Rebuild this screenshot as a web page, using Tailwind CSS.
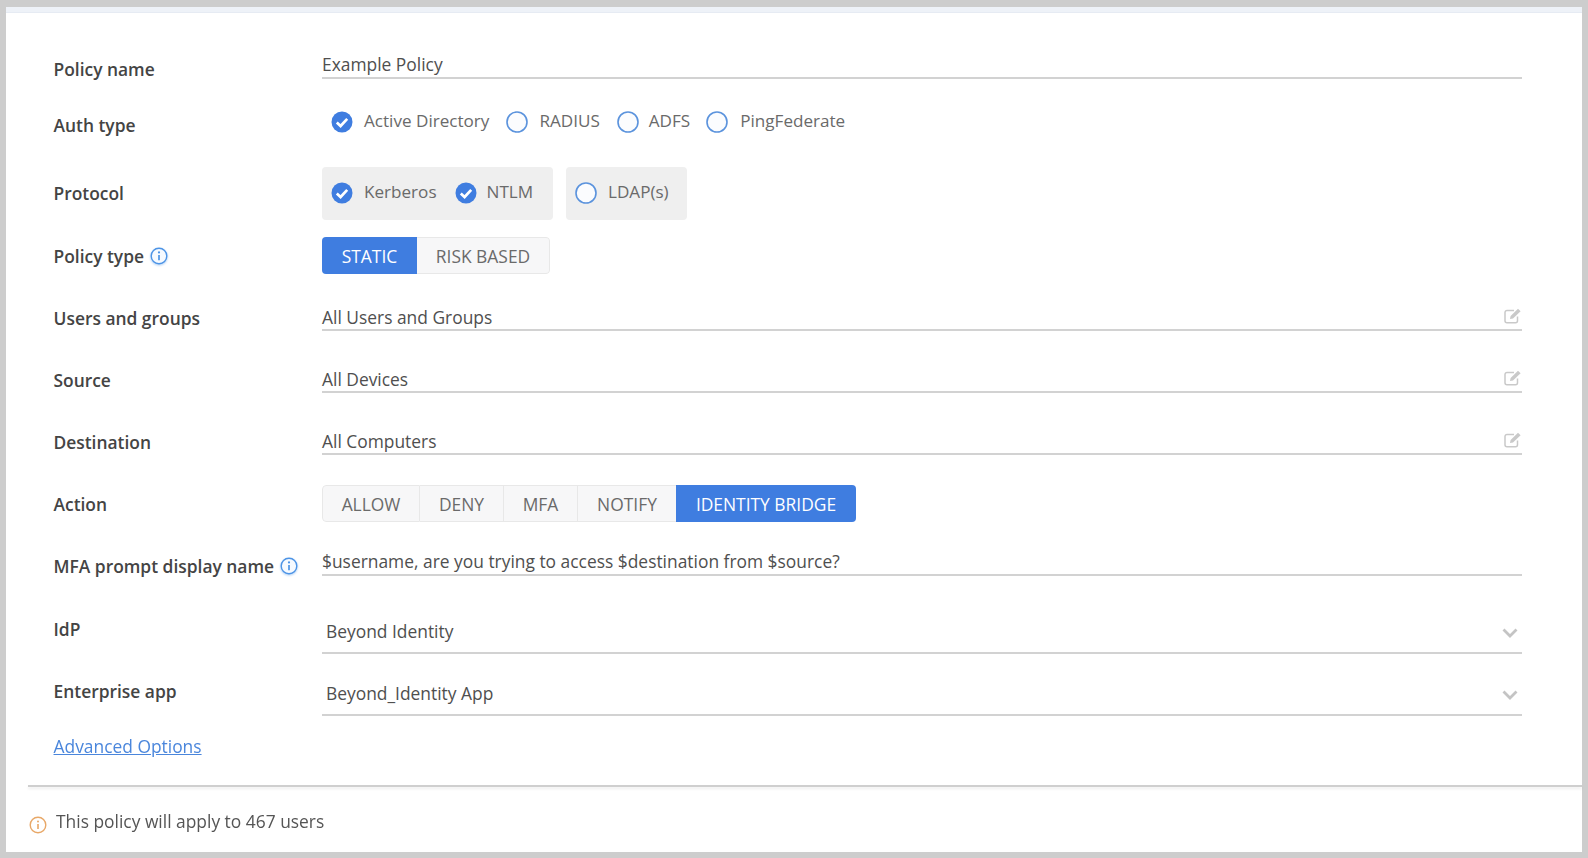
<!DOCTYPE html>
<html lang="en">
<head>
<meta charset="utf-8">
<title>Policy</title>
<script src="https://cdn.jsdelivr.net/npm/@tailwindcss/browser@4"></script>
</head>
<body class="bg-[#cdcdcd] font-['Open_Sans',sans-serif] text-[17.4px] leading-[24px] text-[#4f4f4f]">
<div class="w-[1588px] h-[858px] overflow-hidden pl-[6px] pt-[7px]">
  <div class="w-[1576px] h-[845px] bg-white flex flex-col blur-[0.4px]">
    <div class="h-[6px] shrink-0 bg-[#eef2f8] border-b border-[#e6ebf3]"></div>
    <div class="pl-[47.5px] pr-[60px] pt-[39px] flex flex-col h-[772px] shrink-0">

      <div class="flex h-[27px]">
        <div class="w-[268.5px] font-semibold text-[#444] pt-[5px]">Policy name</div>
        <div class="flex-1 border-b-2 border-[#d2d2d2] h-[27px]">Example Policy</div>
      </div>

      <div class="flex h-[32px] mt-[27px]">
        <div class="w-[268.5px] font-semibold text-[#444] pt-[7px]">Auth type</div>
        <div class="flex items-center pl-[9px] text-[#6a6a6a] text-[17.1px]">
          <svg class="w-[22px] h-[22px] mr-[11px]" viewBox="0 0 22 22"><circle cx="11" cy="11" r="10.5" fill="#3f7de0"/><path d="M5.8 11.4l3.8 3.6L16.2 7.8" fill="none" stroke="#fff" stroke-width="2.7"/></svg>
          <span class="mb-[2px]">Active Directory</span>
          <svg class="w-[22px] h-[22px] ml-[16.5px] mr-[11.5px]" viewBox="0 0 22 22"><circle cx="11" cy="11" r="10" fill="#fbfcfe" stroke="#5b93dd" stroke-width="1.6"/></svg>
          <span class="mb-[2px]">RADIUS</span>
          <svg class="w-[22px] h-[22px] ml-[17px] mr-[10px]" viewBox="0 0 22 22"><circle cx="11" cy="11" r="10" fill="#fbfcfe" stroke="#5b93dd" stroke-width="1.6"/></svg>
          <span class="mb-[2px]">ADFS</span>
          <svg class="w-[22px] h-[22px] ml-[16px] mr-[12px]" viewBox="0 0 22 22"><circle cx="11" cy="11" r="10" fill="#fbfcfe" stroke="#5b93dd" stroke-width="1.6"/></svg>
          <span class="mb-[2px]">PingFederate</span>
        </div>
      </div>

      <div class="flex h-[53px] mt-[29px]">
        <div class="w-[268.5px] font-semibold text-[#444] pt-[14px]">Protocol</div>
        <div class="flex gap-[13px] text-[#6a6a6a] text-[17.1px]">
          <div class="flex items-center h-[53px] w-[231px] pl-[9px] pb-[2px] bg-[#efefef] rounded-[4px]">
            <svg class="w-[22px] h-[22px] mr-[11px]" viewBox="0 0 22 22"><circle cx="11" cy="11" r="10.5" fill="#3f7de0"/><path d="M5.8 11.4l3.8 3.6L16.2 7.8" fill="none" stroke="#fff" stroke-width="2.7"/></svg>
            <span class="mb-[2px]">Kerberos</span>
            <svg class="w-[22px] h-[22px] ml-[18px] mr-[10px]" viewBox="0 0 22 22"><circle cx="11" cy="11" r="10.5" fill="#3f7de0"/><path d="M5.8 11.4l3.8 3.6L16.2 7.8" fill="none" stroke="#fff" stroke-width="2.7"/></svg>
            <span class="mb-[2px]">NTLM</span>
          </div>
          <div class="flex items-center h-[53px] w-[121px] pl-[9px] pb-[2px] bg-[#efefef] rounded-[4px]">
            <svg class="w-[22px] h-[22px] mr-[11px]" viewBox="0 0 22 22"><circle cx="11" cy="11" r="10" fill="#fbfcfe" stroke="#5b93dd" stroke-width="1.6"/></svg>
            <span class="mb-[2px]">LDAP(s)</span>
          </div>
        </div>
      </div>

      <div class="flex h-[37px] mt-[17px]">
        <div class="w-[268.5px] font-semibold text-[#444] flex items-center gap-[6px]">Policy type
          <svg class="w-[18px] h-[18px] drop-shadow-[0_1px_1px_rgba(77,148,230,0.45)]" viewBox="0 0 18 18"><circle cx="9" cy="9" r="7.8" fill="#f6faff" stroke="#4d94e6" stroke-width="1.4"/><circle cx="9" cy="5.4" r="1.1" fill="#4d94e6"/><path d="M9 8v5.2" stroke="#4d94e6" stroke-width="1.7"/></svg>
        </div>
        <div class="flex h-[37px] rounded-[4px] overflow-hidden text-[#6a6a6a]">
          <div class="w-[95px] bg-[#3f7de0] text-white flex items-center justify-center">STATIC</div>
          <div class="w-[133px] bg-[#f7f7f8] border border-l-0 border-[#e8e8e8] rounded-r-[4px] flex items-center justify-center">RISK BASED</div>
        </div>
      </div>

      <div class="flex h-[26px] mt-[31px]">
        <div class="w-[268.5px] font-semibold text-[#444] pt-[1px]">Users and groups</div>
        <div class="flex-1 flex justify-between items-start border-b-2 border-[#d2d2d2] h-[26px]">All Users and Groups
          <svg class="w-[18px] h-[16px] mt-[3px]" viewBox="0 0 18 16" fill="none"><path d="M13.5 8.5v4.3a2 2 0 0 1-2 2H3a2 2 0 0 1-2-2V4.5a2 2 0 0 1 2-2h7" stroke="#c9c9c9" stroke-width="1.5"/><path d="M6 11l.6-3L14 .8l2.6 2.4L9 10.6z" fill="#c9c9c9"/></svg>
        </div>
      </div>

      <div class="flex h-[26px] mt-[36px]">
        <div class="w-[268.5px] font-semibold text-[#444] pt-[1px]">Source</div>
        <div class="flex-1 flex justify-between items-start border-b-2 border-[#d2d2d2] h-[26px]">All Devices
          <svg class="w-[18px] h-[16px] mt-[3px]" viewBox="0 0 18 16" fill="none"><path d="M13.5 8.5v4.3a2 2 0 0 1-2 2H3a2 2 0 0 1-2-2V4.5a2 2 0 0 1 2-2h7" stroke="#c9c9c9" stroke-width="1.5"/><path d="M6 11l.6-3L14 .8l2.6 2.4L9 10.6z" fill="#c9c9c9"/></svg>
        </div>
      </div>

      <div class="flex h-[26px] mt-[36px]">
        <div class="w-[268.5px] font-semibold text-[#444] pt-[1px]">Destination</div>
        <div class="flex-1 flex justify-between items-start border-b-2 border-[#d2d2d2] h-[26px]">All Computers
          <svg class="w-[18px] h-[16px] mt-[3px]" viewBox="0 0 18 16" fill="none"><path d="M13.5 8.5v4.3a2 2 0 0 1-2 2H3a2 2 0 0 1-2-2V4.5a2 2 0 0 1 2-2h7" stroke="#c9c9c9" stroke-width="1.5"/><path d="M6 11l.6-3L14 .8l2.6 2.4L9 10.6z" fill="#c9c9c9"/></svg>
        </div>
      </div>

      <div class="flex h-[37px] mt-[30px]">
        <div class="w-[268.5px] font-semibold text-[#444] flex items-center">Action</div>
        <div class="flex h-[37px] rounded-[4px] overflow-hidden text-[#6a6a6a]">
          <div class="w-[98px] bg-[#f7f7f8] border border-[#e8e8e8] rounded-l-[4px] flex items-center justify-center">ALLOW</div>
          <div class="w-[84px] bg-[#f7f7f8] border-y border-r border-[#e8e8e8] flex items-center justify-center">DENY</div>
          <div class="w-[74px] bg-[#f7f7f8] border-y border-r border-[#e8e8e8] flex items-center justify-center">MFA</div>
          <div class="w-[98px] bg-[#f7f7f8] border-y border-[#e8e8e8] flex items-center justify-center">NOTIFY</div>
          <div class="w-[180px] bg-[#3f7de0] text-white flex items-center justify-center">IDENTITY BRIDGE</div>
        </div>
      </div>

      <div class="flex h-[27px] mt-[27px]">
        <div class="w-[268.5px] font-semibold text-[#444] flex items-start gap-[6px] pt-[5px]"><span>MFA prompt display name</span>
          <svg class="w-[18px] h-[18px] mt-[3px] drop-shadow-[0_1px_1px_rgba(77,148,230,0.45)]" viewBox="0 0 18 18"><circle cx="9" cy="9" r="7.8" fill="#f6faff" stroke="#4d94e6" stroke-width="1.4"/><circle cx="9" cy="5.4" r="1.1" fill="#4d94e6"/><path d="M9 8v5.2" stroke="#4d94e6" stroke-width="1.7"/></svg>
        </div>
        <div class="flex-1 border-b-2 border-[#d2d2d2] h-[27px]">$username, are you trying to access $destination from $source?</div>
      </div>

      <div class="flex h-[37px] mt-[41px]">
        <div class="w-[268.5px] font-semibold text-[#444]">IdP</div>
        <div class="flex-1 flex justify-between border-b-2 border-[#d2d2d2] h-[37px] pl-[4px] pt-[2px]">Beyond Identity
          <svg class="w-[16px] h-[10px] mr-[4.5px] mt-[8.5px]" viewBox="0 0 16 10" fill="none"><path d="M1.5 1.5L8 8l6.5-6.5" stroke="#c4c4c4" stroke-width="2.8"/></svg>
        </div>
      </div>

      <div class="flex h-[37px] mt-[25px]">
        <div class="w-[268.5px] font-semibold text-[#444]">Enterprise app</div>
        <div class="flex-1 flex justify-between border-b-2 border-[#d2d2d2] h-[37px] pl-[4px] pt-[2px]">Beyond_Identity App
          <svg class="w-[16px] h-[10px] mr-[4.5px] mt-[8.5px]" viewBox="0 0 16 10" fill="none"><path d="M1.5 1.5L8 8l6.5-6.5" stroke="#c4c4c4" stroke-width="2.8"/></svg>
        </div>
      </div>

      <div class="mt-[18px]"><a class="text-[#4a86dc] underline">Advanced Options</a></div>
    </div>
    <div class="ml-[22px] h-[2px] shrink-0 bg-[#cfcfcf] shadow-[0_2px_3px_rgba(0,0,0,0.08)]"></div>
    <div class="flex items-center pl-[22.5px] pt-[3px] h-[65px] shrink-0">
      <svg class="w-[18px] h-[18px] mt-[8px] mr-[9.5px]" viewBox="0 0 18 18"><circle cx="9" cy="9" r="7.8" fill="#fff" stroke="#e8a868" stroke-width="1.4"/><circle cx="9" cy="5.6" r="1" fill="#e8a868"/><path d="M9 8v5" stroke="#e8a868" stroke-width="1.6"/></svg>
      <span class="text-[#555]">This policy will apply to 467 users</span>
    </div>
  </div>
</div>
</body>
</html>
